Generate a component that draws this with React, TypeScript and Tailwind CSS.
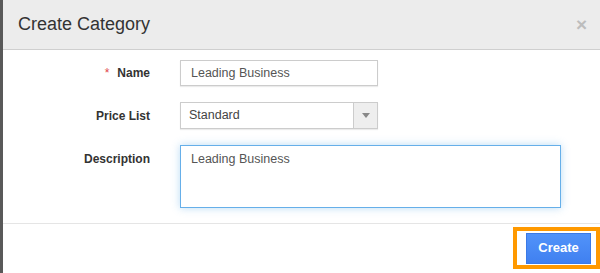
import { useState } from 'react'

const font = { fontFamily: '"Liberation Sans", Arial, sans-serif' }

export default function App() {
  const [name, setName] = useState('Leading Business')
  const [desc, setDesc] = useState('Leading Business')

  return (
    <div className="flex h-[273px] w-[600px] overflow-hidden bg-white" style={font}>
      {/* backdrop sliver */}
      <div className="w-[3px] shrink-0 bg-[#595959]" />

      <div className="flex flex-1 flex-col">
        <div className="flex h-[50px] items-center justify-between border-b border-[#cfcfcf] bg-[#ececec] pl-[15px] pr-[13px]">
          <h1 className="text-[18px] leading-none text-[#333] pb-[1px]">Create Category</h1>
          <button className="text-[19px] font-bold leading-none text-[#bdbdbd]">×</button>
        </div>

        <div className="flex flex-col gap-4 pt-[10px] pb-[15px] text-[12px]">
          <div className="flex items-center">
            <label className="w-[147px] text-right font-bold text-[#333]">
              <span className="mr-[8px] font-normal text-[#e0474c]">*</span>Name
            </label>
            <input
              value={name}
              onChange={(e) => setName(e.target.value)}
              className="ml-[30px] h-[26px] w-[198px] border border-[#ccc] px-[10px] text-[12.5px] text-[#555] shadow-[0_1px_1px_rgba(0,0,0,0.08)] outline-none"
            />
          </div>

          <div className="flex items-center">
            <label className="w-[147px] text-right font-bold text-[#333]">Price List</label>
            <div className="ml-[30px] flex h-[27px] w-[198px] border border-[#ccc] shadow-[0_1px_1px_rgba(0,0,0,0.08)]">
              <span className="flex flex-1 items-center pl-[8px] text-[12.5px] text-[#444]">Standard</span>
              <span className="flex w-[24px] items-center justify-center border-l border-[#ccc] bg-[#eee]">
                <svg width="8" height="5" viewBox="0 0 8 5">
                  <path d="M0 0h8L4 5z" fill="#888" />
                </svg>
              </span>
            </div>
          </div>

          <div className="flex items-start">
            <label className="w-[147px] pt-[5px] text-right font-bold text-[#333]">Description</label>
            <textarea
              value={desc}
              onChange={(e) => setDesc(e.target.value)}
              className="ml-[30px] h-[63px] w-[381px] resize-none border border-[#66afe9] px-[10px] py-[4px] text-[12.5px] text-[#555] shadow-[0_0_8px_rgba(102,175,233,0.45)] outline-none"
            />
          </div>
        </div>

        <div className="flex flex-1 items-start justify-end border-t border-[#e5e5e5] pt-[3px]">
          <div className="flex h-[42px] w-[87px] items-center border-4 border-[#ff9900] pl-[9px]">
            <button className="h-[31px] w-[65px] border border-[#3b7ae6] bg-[linear-gradient(#5193fa,#4080f0)] text-[13px] font-bold text-white">
              Create
            </button>
          </div>
        </div>
      </div>
    </div>
  )
}
